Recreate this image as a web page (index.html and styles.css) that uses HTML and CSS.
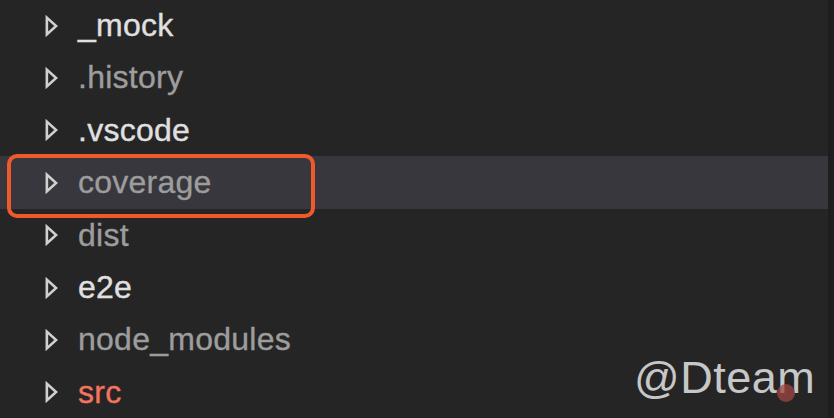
FILE: index.html
```html
<!DOCTYPE html>
<html>
<head>
<meta charset="utf-8">
<link rel="stylesheet" href="styles.css">
</head>
<body>
<div class="explorer">
  <div class="tree">
    <div class="row"><svg class="caret" viewBox="0 0 14 22"><path d="M2 2 L12 11 L2 20 Z"/></svg><span class="name bright">_mock</span></div>
    <div class="row"><svg class="caret" viewBox="0 0 14 22"><path d="M2 2 L12 11 L2 20 Z"/></svg><span class="name dim">.history</span></div>
    <div class="row"><svg class="caret" viewBox="0 0 14 22"><path d="M2 2 L12 11 L2 20 Z"/></svg><span class="name bright">.vscode</span></div>
    <div class="row selected"><svg class="caret" viewBox="0 0 14 22"><path d="M2 2 L12 11 L2 20 Z"/></svg><span class="name dim">coverage</span></div>
    <div class="row"><svg class="caret" viewBox="0 0 14 22"><path d="M2 2 L12 11 L2 20 Z"/></svg><span class="name dim">dist</span></div>
    <div class="row"><svg class="caret" viewBox="0 0 14 22"><path d="M2 2 L12 11 L2 20 Z"/></svg><span class="name bright">e2e</span></div>
    <div class="row"><svg class="caret" viewBox="0 0 14 22"><path d="M2 2 L12 11 L2 20 Z"/></svg><span class="name dim">node_modules</span></div>
    <div class="row"><svg class="caret" viewBox="0 0 14 22"><path d="M2 2 L12 11 L2 20 Z"/></svg><span class="name modified">src</span></div>
  </div>
  <div class="scrollbar"></div>
  <div class="callout"></div>
  <div class="watermark">@Dteam<span class="dot"></span></div>
</div>
</body>
</html>
```
FILE: styles.css
```css
html, body {
  margin: 0;
  padding: 0;
  background: #252526;
  width: 834px;
  height: 418px;
  overflow: hidden;
}
.explorer {
  position: relative;
  display: flex;
  width: 834px;
  height: 418px;
  font-family: "Liberation Sans", Arial, sans-serif;
}
.tree {
  flex: 1;
  display: flex;
  flex-direction: column;
  margin-top: -1px;
}
.row {
  display: flex;
  align-items: center;
  height: 52.4px;
  flex: none;
  padding-left: 45px;
}
.row.selected {
  background: #37373d;
}
.caret {
  width: 13px;
  height: 22px;
  flex: none;
  margin-right: 20px;
  margin-top: 1px;
}
.caret path {
  fill: none;
  stroke: #d0d0d0;
  stroke-width: 2.8;
  stroke-linejoin: miter;
}
.name {
  font-size: 32px;
  line-height: 52.4px;
  letter-spacing: 0.25px;
  -webkit-text-stroke: 0.35px currentColor;
}
.bright { color: #e0e0e0; }
.dim { color: #9d9d9d; }
.modified { color: #f5735f; }
.scrollbar {
  width: 6px;
  flex: none;
  background: #1e1e1e;
}
.callout {
  position: absolute;
  left: 7px;
  top: 154px;
  width: 300px;
  height: 56px;
  border: 4.5px solid #ef5a2b;
  border-radius: 10px;
}
.watermark {
  position: absolute;
  left: 634px;
  top: 352px;
  font-size: 45px;
  line-height: 52px;
  color: rgba(230, 230, 230, 0.85);
  letter-spacing: 0.5px;
}
.dot {
  position: absolute;
  left: 143px;
  top: 32px;
  width: 18px;
  height: 18px;
  border-radius: 50%;
  background: rgba(160, 70, 65, 0.75);
}
```
